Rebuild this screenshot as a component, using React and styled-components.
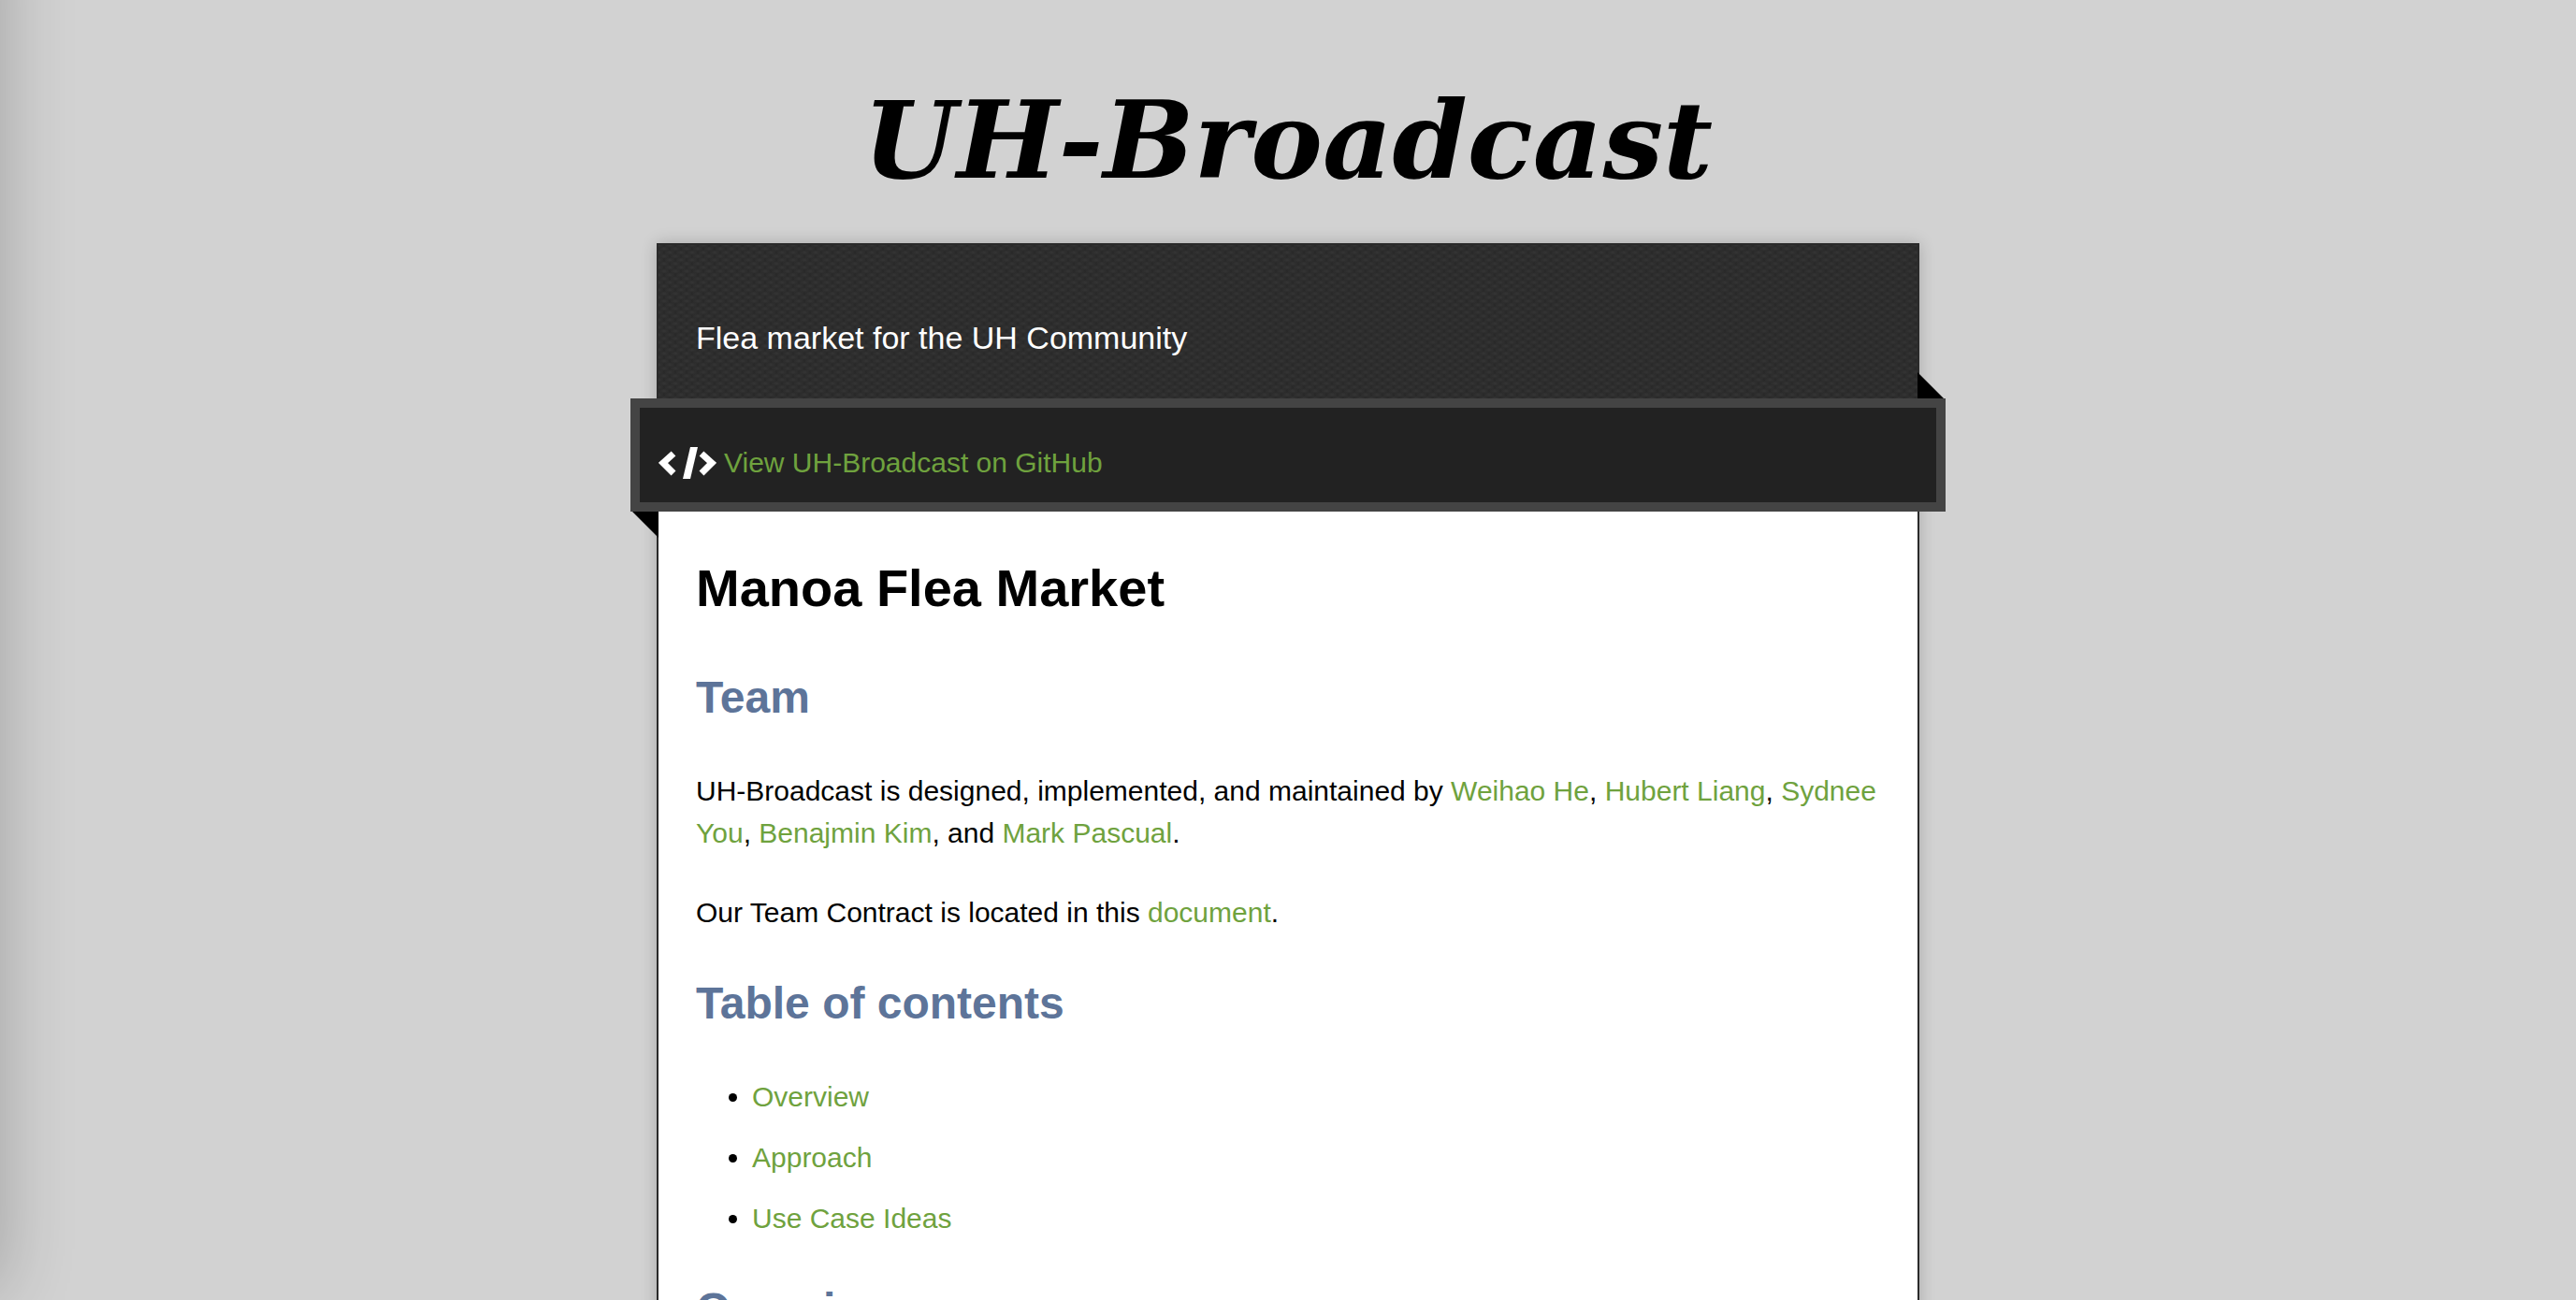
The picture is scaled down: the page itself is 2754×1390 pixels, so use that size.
import React from "react";
import styled, { createGlobalStyle } from "styled-components";

const GlobalStyle = createGlobalStyle`
  *, *::before, *::after { box-sizing: border-box; }
  html, body, #root { height: 100%; }
  body {
    margin: 0;
    background: #d2d2d2;
    color: #000;
    font: 30px/45px "Liberation Sans", Arial, sans-serif;
  }
`;

const Page = styled.div`
  height: 100%;
  overflow: hidden auto;
  scrollbar-width: none;
  padding: 0 28px;

  &::before {
    content: "";
    position: fixed;
    top: -80px;
    bottom: 10px;
    left: -100px;
    width: 100px;
    box-shadow: 0 0 80px rgba(0, 0, 0, 0.24);
  }
`;

const Title = styled.h1`
  margin: 0;
  padding: 80px 0 40px;
  text-align: center;
  font: italic bold 115px/140px Georgia, "DejaVu Serif", serif;
`;

const Sheet = styled.div`
  max-width: 1350px;
  margin: 0 auto;
  background: #fff;
  border: 2px solid #2a2a2a;
  box-shadow: 0 0 16px rgba(0, 0, 0, 0.2);
`;

const Banner = styled.header`
  padding: 74px 40px 40px;
  color: #fff;
  font-size: 34px;
  line-height: 50px;
  background-color: #292929;
  background-image:
    radial-gradient(ellipse 6px 3px, #353535, transparent),
    radial-gradient(ellipse 6px 3px, #353535, transparent);
  background-size: 12px 8px;
  background-position: 0 0, 6px 4px;
`;

const Tagline = styled.p`
  margin: 0;
`;

const Ribbon = styled.div`
  position: relative;
  display: flex;
  align-items: center;
  gap: 8px;
  margin: 0 -30px;
  padding: 36px 20px 20px;
  background: #222;
  border: 10px solid #444;

  &::before,
  &::after {
    content: "";
    position: absolute;
    border: solid transparent;
  }
  &::before {
    top: 100%;
    left: -8px;
    margin-top: 10px;
    border-width: 0 28px 28px 0;
    border-right-color: #000;
  }
  &::after {
    bottom: 100%;
    right: -8px;
    margin-bottom: 10px;
    border-width: 28px 0 0 28px;
    border-left-color: #000;
  }
`;

const CodeIcon = styled.svg`
  width: 62px;
  height: 34px;
  fill: none;
  stroke: #fff;
`;

const Link = styled.a`
  color: #6fa23e;
  text-decoration: none;
`;

const Content = styled.main`
  padding: 42px 40px;
`;

const Heading = styled.h1`
  margin: 0 0 42px;
  font-size: 56px;
  line-height: 80px;
`;

const Section = styled.h2`
  margin: 0 0 42px;
  color: #5d7499;
  font-size: 48px;
  line-height: 70px;
`;

const Text = styled.p`
  margin: 0 0 40px;
`;

const Contents = styled.ul`
  display: grid;
  gap: 20px;
  margin: 0 0 40px;
  padding: 0 0 0 60px;
`;

const team = ["Weihao He", "Hubert Liang", "Sydnee You", "Benajmin Kim", "Mark Pascual"];
const topics = ["Overview", "Approach", "Use Case Ideas"];

export default function App() {
  return (
    <>
      <GlobalStyle />
      <Page>
        <Title>UH-Broadcast</Title>
        <Sheet>
          <Banner>
            <Tagline>Flea market for the UH Community</Tagline>
          </Banner>
          <Ribbon>
            <CodeIcon viewBox="0 0 62 34" aria-hidden="true">
              <path d="M16 7 5 17l11 11M46 7l11 10-11 11" strokeWidth="7" />
              <path d="M34 0h8l-8 34h-8z" fill="#fff" stroke="none" />
            </CodeIcon>
            <Link href="#github">View UH-Broadcast on GitHub</Link>
          </Ribbon>
          <Content>
            <Heading>Manoa Flea Market</Heading>
            <Section>Team</Section>
            <Text>
              UH-Broadcast is designed, implemented, and maintained by{" "}
              {team.map((name, i) => (
                <React.Fragment key={name}>
                  {i > 0 && (i === team.length - 1 ? ", and " : ", ")}
                  <Link href="#team">{name}</Link>
                </React.Fragment>
              ))}
              .
            </Text>
            <Text>
              Our Team Contract is located in this <Link href="#contract">document</Link>.
            </Text>
            <Section>Table of contents</Section>
            <Contents>
              {topics.map((topic) => (
                <li key={topic}>
                  <Link href="#overview">{topic}</Link>
                </li>
              ))}
            </Contents>
            <Section id="overview">Overview</Section>
          </Content>
        </Sheet>
      </Page>
    </>
  );
}
